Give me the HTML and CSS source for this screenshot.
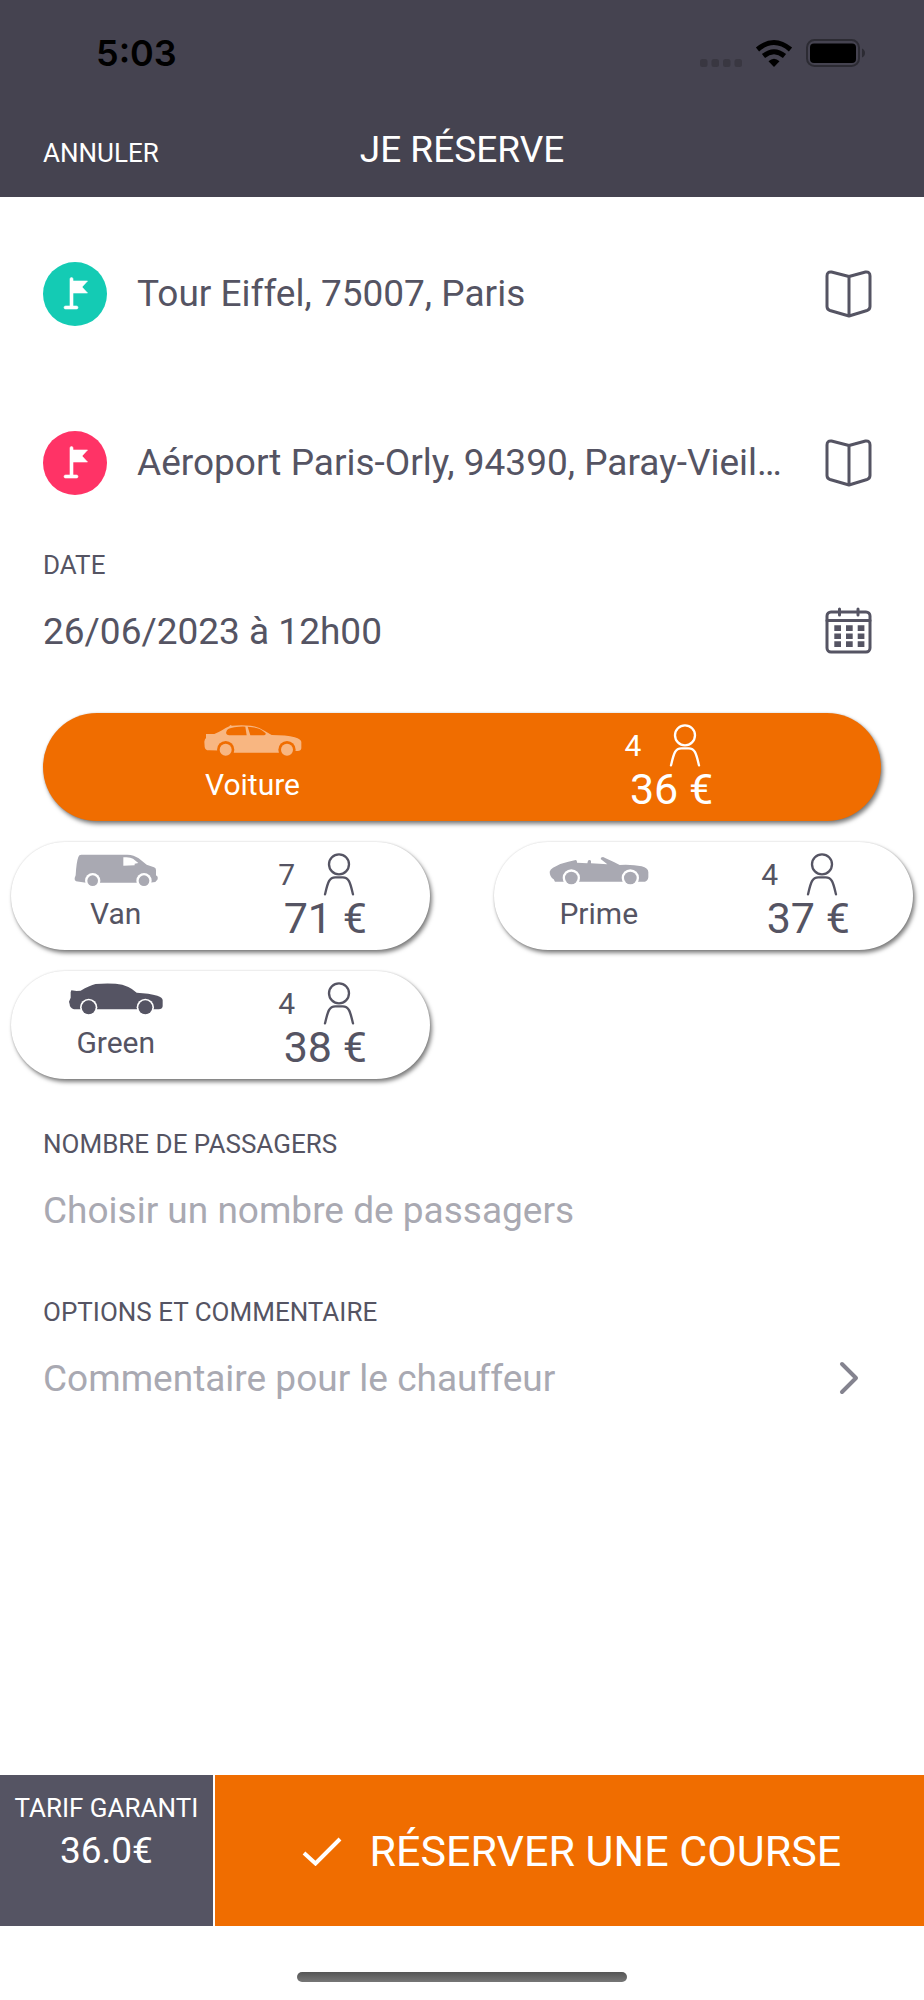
FILE: index.html
```html
<!DOCTYPE html>
<html lang="fr">
<head>
<meta charset="utf-8">
<meta name="viewport" content="width=device-width, initial-scale=1">
<title>Je réserve</title>
<link rel="stylesheet" href="styles.css">
</head>
<body>
<svg class="sprite" width="0" height="0" aria-hidden="true">
  <symbol id="flag" viewBox="0 0 64 64">
    <path d="M27 17a1.500 1.500 0 0 1 3 0V19H44.500L39 25l5.500 6H30V44h3.500a1.500 1.500 0 0 1 0 3h-11a1.500 1.500 0 0 1 0-3H27z" fill="#fff" stroke="#fff" stroke-width="0.600"/>
  </symbol>
  <symbol id="book" viewBox="0 0 48 48">
    <path d="M24 6.500 6.500 2Q2 1.500 2 6V36.500Q2 39.500 5 40.500L24 46l18-5.500q3-1 3-4V6Q45 1.500 40.500 2ZM24 6.500V46" fill="none" stroke="currentColor" stroke-width="3" stroke-linejoin="round"/>
  </symbol>
  <symbol id="person" viewBox="0 0 96 129">
    <g fill="none" stroke="currentColor" stroke-width="7" stroke-linecap="round">
      <circle cx="48" cy="34" r="30"/>
      <path d="M6 124C14 92 17 73 37 73H59C79 73 82 92 90 124"/>
    </g>
  </symbol>
</svg>

<header class="header">
  <div class="status">
    <span class="status-time">5:03</span>
    <svg class="status-icons" viewBox="0 0 165 28" aria-hidden="true">
      <g fill="#393741">
        <rect x="0" y="20" width="7.500" height="8" rx="2.500"/>
        <rect x="11.500" y="20" width="7.500" height="8" rx="2.500"/>
        <rect x="23" y="20" width="7.500" height="8" rx="2.500"/>
        <rect x="34.500" y="20" width="7.500" height="8" rx="2.500"/>
      </g>
      <g fill="none" stroke="#000" stroke-width="5">
        <path d="M57.500 10.500Q74 -3.500 90.500 10.500"/>
        <path d="M63.500 17Q74 8.500 84.500 17"/>
      </g>
      <path d="M68.500 22.300Q74 17 79.500 22.300L74 28z"/>
      <rect x="107" y="1" width="52" height="26" rx="7.500" fill="none" stroke="#2c2b33" stroke-width="2"/>
      <rect x="110" y="4.500" width="46" height="19.500" rx="4"/>
      <path d="M162 9.500Q165 11 165 14T162 18.500z" fill="#2c2b33"/>
    </svg>
  </div>
  <nav class="nav">
    <a class="cancel" href="#">ANNULER</a>
    <h1 class="title">JE RÉSERVE</h1>
  </nav>
</header>

<main class="main">
  <form id="booking">
    <div class="row address">
      <svg class="pin pin-from" aria-hidden="true"><use href="#flag"/></svg>
      <input class="value" type="text" aria-label="Départ" value="Tour Eiffel, 75007, Paris">
      <button class="icon-button" type="button" aria-label="Carnet d'adresses"><svg class="icon"><use href="#book"/></svg></button>
    </div>
    <div class="row address">
      <svg class="pin pin-to" aria-hidden="true"><use href="#flag"/></svg>
      <input class="value" type="text" aria-label="Arrivée" value="Aéroport Paris-Orly, 94390, Paray-Vieil…">
      <button class="icon-button" type="button" aria-label="Carnet d'adresses"><svg class="icon"><use href="#book"/></svg></button>
    </div>

    <div class="field">
      <label class="label" for="date">DATE</label>
      <div class="row">
        <input class="value" id="date" type="text" value="26/06/2023 à 12h00">
        <button class="icon-button" type="button" aria-label="Choisir une date">
          <svg class="icon" viewBox="0 0 48 48">
            <g fill="none" stroke="currentColor" stroke-width="3" stroke-linecap="round">
              <rect x="2" y="5" width="43" height="40" rx="4"/>
              <path d="M2 13.500H45M14.500 2V8M33 2V8"/>
            </g>
            <path d="M9.300 18.300H16V24H9.300zM21 18.300H27.700V24H21zM32.700 18.300H39.400V24H32.700zM9.300 26.500H16V32H9.300zM21 26.500H27.700V32H21zM32.700 26.500H39.400V32H32.700zM9.300 34.300H16V40H9.300zM21 34.300H27.700V40H21zM32.700 34.300H39.400V40H32.700z" fill="currentColor"/>
          </svg>
        </button>
      </div>
    </div>

    <div class="vehicles" role="radiogroup" aria-label="Véhicule">
      <label class="card card-wide">
        <input class="card-radio" type="radio" name="vehicle" checked>
        <span class="kind">
          <svg class="car" viewBox="0 0 300 96" aria-hidden="true">
            <path fill="currentColor" d="M9 27H34Q45 23 57 16 68 8 79 4L82 0 87 2Q115-1 143 2 165 5 184 17L206 30Q250 30 275 37 296 43 295 52V70Q294 78 284 78H270V83H70V77L19 76Q7 77 5 66L4 50Q5 43 9 39z"/>
            <path class="cut" d="M70 20Q72 10 94 7 114 4 127 5L131 31H79Q67 29 70 20zM134 5Q160 7 170 12 184 20 188 25 189 31 179 31H142z"/>
            <circle class="cut" cx="68" cy="74" r="26"/><circle class="cut" cx="252" cy="74" r="26"/>
            <circle cx="68" cy="74" r="18" fill="currentColor"/><circle cx="252" cy="74" r="18" fill="currentColor"/>
          </svg>
          <span class="name">Voiture</span>
        </span>
        <span class="offer">
          <span class="seats">4<svg class="person" aria-label="places"><use href="#person"/></svg></span>
          <span class="price">36 €</span>
        </span>
      </label>

      <label class="card">
        <input class="card-radio" type="radio" name="vehicle">
        <span class="kind">
          <svg class="car" viewBox="0 0 300 96" aria-hidden="true">
            <path fill="currentColor" d="M46 2H184Q204 3 218 13L242 32 264 40Q270 42 270 48V64L275 68V76L268 84 250 86H60L30 82Q25 80 26 72L29 64Q31 25 37 9 39 2 46 2z"/>
            <path class="cut" d="M172 10Q192 8 201 14L217 27 206 29V34L172 35z"/>
            <circle class="cut" cx="80" cy="80" r="23"/><circle class="cut" cx="234" cy="80" r="23"/>
            <circle cx="80" cy="80" r="16" fill="currentColor"/><circle cx="234" cy="80" r="16" fill="currentColor"/>
          </svg>
          <span class="name">Van</span>
        </span>
        <span class="offer">
          <span class="seats">7<svg class="person" aria-label="places"><use href="#person"/></svg></span>
          <span class="price">71 €</span>
        </span>
      </label>

      <label class="card">
        <input class="card-radio" type="radio" name="vehicle">
        <span class="kind">
          <svg class="car" viewBox="0 0 300 96" aria-hidden="true">
            <path fill="currentColor" d="M2 53Q4 45 12 41 35 27 58 23L80 18Q85 18 84 26L115 28 117 20Q121 16 126 20V28L175 31 155 15Q155 9 162 9L196 25 212 33Q250 31 278 37 297 42 298 54V70Q297 80 288 83H18L14 76Q2 68 2 53z"/>
            <circle class="cut" cx="67" cy="72" r="26"/><circle class="cut" cx="244" cy="72" r="26"/>
            <circle cx="67" cy="72" r="19" fill="currentColor"/><circle cx="244" cy="72" r="19" fill="currentColor"/>
          </svg>
          <span class="name">Prime</span>
        </span>
        <span class="offer">
          <span class="seats">4<svg class="person" aria-label="places"><use href="#person"/></svg></span>
          <span class="price">37 €</span>
        </span>
      </label>

      <label class="card">
        <input class="card-radio" type="radio" name="vehicle">
        <span class="kind">
          <svg class="car car-dark" viewBox="0 0 300 96" aria-hidden="true">
            <path fill="currentColor" d="M16 22 32 24 44 23Q70 8 89 3 118 0 149 2 170 3 187 12 200 18 212 29 250 31 274 38 290 43 290 52V70Q289 79 278 79H24Q11 75 11 64L9 56 14 44V28z"/>
            <circle class="cut" cx="68" cy="73" r="26"/><circle class="cut" cx="238" cy="73" r="26"/>
            <circle cx="68" cy="73" r="21" fill="currentColor"/><circle cx="238" cy="73" r="21" fill="currentColor"/>
          </svg>
          <span class="name">Green</span>
        </span>
        <span class="offer">
          <span class="seats">4<svg class="person" aria-label="places"><use href="#person"/></svg></span>
          <span class="price">38 €</span>
        </span>
      </label>
    </div>

    <div class="field">
      <label class="label" for="passengers">NOMBRE DE PASSAGERS</label>
      <div class="row">
        <select class="value value-empty" id="passengers">
          <option>Choisir un nombre de passagers</option>
        </select>
      </div>
    </div>

    <div class="field">
      <label class="label" for="comment">OPTIONS ET COMMENTAIRE</label>
      <div class="row">
        <input class="value" id="comment" type="text" placeholder="Commentaire pour le chauffeur">
        <button class="icon-button" type="button" aria-label="Ouvrir les options">
          <svg class="icon" viewBox="0 0 48 48"><path d="M17 10 31 24 17 38" fill="none" stroke="#84838f" stroke-width="4" stroke-linecap="round" stroke-linejoin="round"/></svg>
        </button>
      </div>
    </div>
  </form>
</main>

<footer class="footer">
  <div class="bar">
    <div class="fare">
      <span class="fare-label">TARIF GARANTI</span>
      <span class="fare-price">36.0€</span>
    </div>
    <button class="book" type="submit" form="booking">
      <svg class="check" viewBox="0 0 40 30" aria-hidden="true"><path d="M2 17 13.500 27.500 38 3" fill="none" stroke="#fff" stroke-width="4"/></svg>
      RÉSERVER UNE COURSE
    </button>
  </div>
  <div class="home-indicator"></div>
</footer>
</body>
</html>
```

FILE: styles.css
```css
:root {
  --ink: #555463;
  --header: #454350;
  --orange: #f06d00;
  --muted: #a9a9b2;
  --gutter: 43px;
}

* {
  box-sizing: border-box;
}

body {
  margin: 0;
  min-height: 100vh;
  display: flex;
  flex-direction: column;
  background: #fff;
  color: var(--ink);
  font-family: Roboto, "Liberation Sans", sans-serif;
  font-size: 37px;
}

button,
input,
select {
  margin: 0;
  padding: 0;
  border: 0;
  background: none;
  color: inherit;
  font: inherit;
}

.sprite {
  position: absolute;
}

.header {
  padding-bottom: 25px;
  background: var(--header);
  color: #fff;
}

.status {
  display: flex;
  align-items: center;
  justify-content: space-between;
  height: 105px;
  padding: 0 59px 0 96px;
  color: #000;
}

.status-time {
  font-family: Inter, sans-serif;
  font-size: 36px;
  font-weight: 600;
}

.status-icons {
  width: 165px;
  height: 28px;
}

.nav {
  display: grid;
  grid-template-columns: 1fr auto 1fr;
  align-items: baseline;
  padding: 23px var(--gutter) 0;
}

.cancel {
  color: inherit;
  font-size: 26px;
  text-decoration: none;
}

.title {
  margin: 0;
  font-size: 37px;
  font-weight: 400;
  line-height: 44px;
}

.main {
  flex: 1;
  padding-top: 12px;
}

.row {
  display: flex;
  align-items: center;
  height: 96px;
}

.address {
  height: 169px;
  padding: 0 var(--gutter);
}

.pin {
  flex: none;
  width: 64px;
  height: 64px;
  margin-right: 30px;
  border-radius: 50%;
}

.pin-from {
  background: #14cbb4;
}

.pin-to {
  background: #ff3366;
}

.value {
  flex: 1;
  min-width: 0;
  height: 48px;
  appearance: none;
  text-overflow: ellipsis;
}

.value-empty,
.value::placeholder {
  color: var(--muted);
  opacity: 1;
}

.icon-button {
  display: flex;
  flex: none;
  align-items: center;
  justify-content: center;
  width: 64px;
  height: 64px;
}

.icon {
  width: 48px;
  height: 48px;
}

.field {
  padding: 0 var(--gutter);
}

.field + .field {
  margin-top: 36px;
}

.label {
  display: block;
  font-size: 26px;
  line-height: 36px;
}

.vehicles {
  display: grid;
  grid-template-columns: 1fr 1fr;
  gap: 21px 64px;
  margin: 34px 11px 47px;
}

.card {
  --surface: #fff;
  --car: var(--muted);
  display: grid;
  grid-template-columns: 1fr 1fr;
  height: 108px;
  border-radius: 54px;
  background: var(--surface);
  box-shadow: 2px 3px 4px rgba(0, 0, 0, 0.5), 0 0 2px rgba(0, 0, 0, 0.15);
  cursor: pointer;
}

.card-wide {
  grid-column: 1 / -1;
  margin: 0 32px;
}

.card:has(:checked) {
  --surface: var(--orange);
  --car: #f8b681;
  color: #fff;
}

.card-radio {
  position: absolute;
  appearance: none;
}

.kind,
.offer {
  display: flex;
  flex-direction: column;
  align-items: center;
}

.kind {
  padding-top: 12px;
}

.offer {
  padding-top: 11px;
}

.car {
  width: 100px;
  height: 32px;
  margin-bottom: 9px;
  color: var(--car);
}

.car-dark {
  color: var(--ink);
}

.cut {
  fill: var(--surface);
}

.name {
  font-size: 30px;
  line-height: 38px;
}

.seats {
  display: flex;
  align-items: center;
  gap: 28px;
  height: 43px;
  padding-right: 17px;
  font-size: 30px;
}

.person {
  width: 32px;
  height: 43px;
}

.price {
  font-size: 43px;
  line-height: 44px;
}

.footer {
  padding-bottom: 18px;
}

.bar {
  display: grid;
  grid-template-columns: 3fr 10fr;
  gap: 2px;
  min-height: 151px;
}

.fare {
  display: flex;
  flex-direction: column;
  align-items: center;
  padding-top: 15px;
  background: var(--ink);
  color: #fff;
}

.fare-label {
  font-size: 26px;
  line-height: 36px;
  white-space: nowrap;
}

.fare-price {
  line-height: 50px;
}

.book {
  display: flex;
  align-items: center;
  justify-content: center;
  gap: 28px;
  padding-left: 4px;
  background: var(--orange);
  color: #fff;
  font-size: 43px;
  white-space: nowrap;
}

.check {
  width: 40px;
  height: 30px;
}

.home-indicator {
  width: 330px;
  height: 10px;
  margin: 46px auto 0;
  border-radius: 5px;
  background: linear-gradient(#555, #777);
}
```
